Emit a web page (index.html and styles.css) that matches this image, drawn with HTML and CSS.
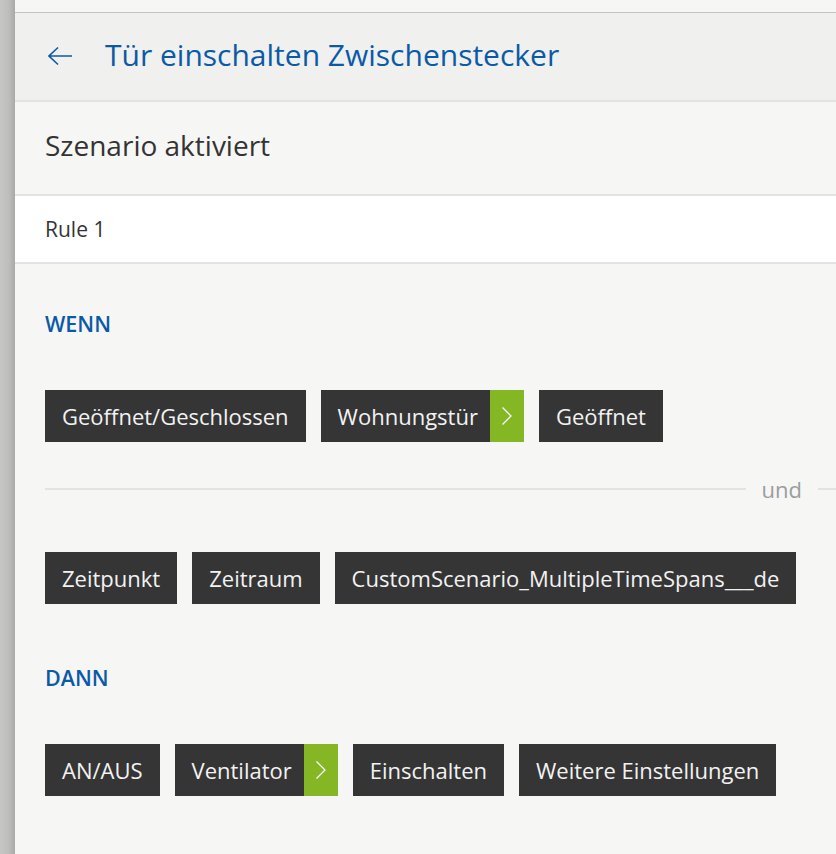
FILE: index.html
```html
<!DOCTYPE html>
<html lang="de">
<head>
<meta charset="utf-8">
<title>Tür einschalten Zwischenstecker</title>
<link rel="stylesheet" href="styles.css">
</head>
<body>
<div class="app">
  <div class="backdrop"></div>
  <main class="panel">
    <div class="topgap"></div>
    <header class="header">
      <svg class="back" width="26" height="20" viewBox="0 0 26 20" aria-hidden="true">
        <path d="M1 10 H24 M10 1.5 L1 10 L10 18.5" fill="none" stroke="#0b5aa6" stroke-width="1.6"/>
      </svg>
      <h1 class="title">Tür einschalten Zwischenstecker</h1>
    </header>
    <section class="status"><span class="status-text">Szenario aktiviert</span></section>
    <section class="rule">Rule 1</section>
    <section class="content">
      <h2 class="label label-wenn">WENN</h2>
      <div class="chips">
        <span class="chip">Geöffnet/Geschlossen</span>
        <span class="chip chip-nav">Wohnungstür<span class="nav"><svg width="12" height="20" viewBox="0 0 12 20"><path d="M1.5 1.5 L10 10 L1.5 18.5" fill="none" stroke="#fff" stroke-width="1.3"/></svg></span></span>
        <span class="chip">Geöffnet</span>
      </div>
      <div class="divider"><span class="line"></span><span class="und">und</span><span class="line line-end"></span></div>
      <div class="chips">
        <span class="chip">Zeitpunkt</span>
        <span class="chip">Zeitraum</span>
        <span class="chip">CustomScenario_MultipleTimeSpans___de</span>
      </div>
      <h2 class="label label-dann">DANN</h2>
      <div class="chips">
        <span class="chip">AN/AUS</span>
        <span class="chip chip-nav">Ventilator<span class="nav"><svg width="12" height="20" viewBox="0 0 12 20"><path d="M1.5 1.5 L10 10 L1.5 18.5" fill="none" stroke="#fff" stroke-width="1.3"/></svg></span></span>
        <span class="chip">Einschalten</span>
        <span class="chip">Weitere Einstellungen</span>
      </div>
    </section>
  </main>
</div>
</body>
</html>
```
FILE: styles.css
```css
* { box-sizing: border-box; }
html, body { margin: 0; padding: 0; height: 100%; }
body {
  font-family: "Open Sans", "Noto Sans", sans-serif;
  background: #f6f6f5;
  color: #333;
  overflow: hidden;
}
.app { display: flex; height: 854px; }
.backdrop {
  width: 15px;
  flex: none;
  background: linear-gradient(to right, #c6c6c5 0%, #bdbdbc 60%, #a9a9a8 100%);
}
.panel {
  flex: 1;
  display: flex;
  flex-direction: column;
  background: #f6f6f5;
  min-width: 0;
}
.topgap { height: 13px; background: #f6f6f5; border-bottom: 1px solid #c4c4c2; }
.header {
  height: 89px;
  background: #f0f0ef;
  border-bottom: 2px solid #e3e3e1;
  display: flex;
  align-items: center;
  padding-left: 33px;
  padding-bottom: 4px;
}
.back { flex: none; margin-top: 2px; }
.title {
  margin: 0 0 0 31px;
  font-size: 30px;
  font-weight: 400;
  color: #0b5aa6;
  line-height: 38px;
  white-space: nowrap;
}
.status {
  height: 94px;
  border-bottom: 2px solid #e3e3e1;
  display: flex;
  align-items: center;
  padding-left: 30px;
  padding-bottom: 6px;
  font-size: 28px;
  color: #333;
}
.rule {
  height: 68px;
  background: #fff;
  border-bottom: 2px solid #e3e3e1;
  display: flex;
  align-items: center;
  padding-left: 30px;
  font-size: 21px;
  color: #333;
}
.content { padding: 48px 0 0 30px; }
.label {
  margin: 0;
  font-size: 21.5px;
  line-height: 24px;
  font-weight: 600;
  color: #0b5aa6;
}
.label-wenn { margin-bottom: 54px; }
.label-dann { margin: 62px 0 54px; }
.chips { display: flex; gap: 15px; }
.chip {
  display: flex;
  align-items: center;
  height: 52px;
  padding: 0 17px;
  background: #353535;
  color: #f2f2f2;
  font-size: 22px;
  white-space: nowrap;
}
.chip-nav { padding-right: 0; }
.nav {
  display: flex;
  align-items: center;
  justify-content: center;
  width: 34px;
  height: 52px;
  margin-left: 12px;
  background: #85b623;
}
.divider {
  display: flex;
  align-items: center;
  height: 24px;
  margin: 35px 0 51px;
}
.line { flex: 1; height: 2px; background: #e3e3e1; }
.line-end { flex: none; width: 18px; }
.und { padding: 0 16px; font-size: 22px; color: #999ea1; line-height: 24px; }
```
